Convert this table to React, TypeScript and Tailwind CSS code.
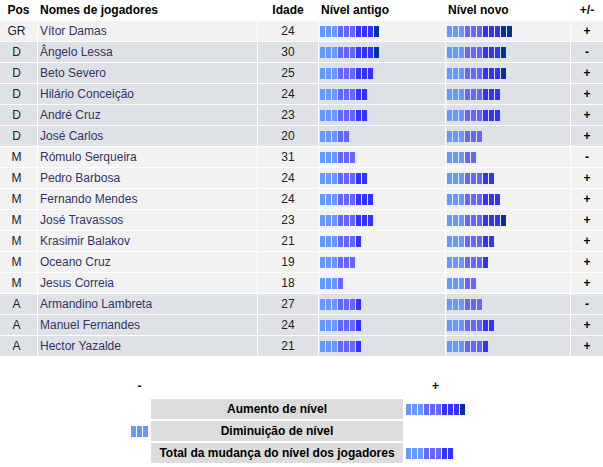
import React from "react";

type Player = [string, string, number, number, number, string];

const players: Player[] = [
  ["GR", "Vítor Damas", 24, 10, 11, "+"],
  ["D", "Ângelo Lessa", 30, 10, 10, "-"],
  ["D", "Beto Severo", 25, 9, 10, "+"],
  ["D", "Hilário Conceição", 24, 8, 9, "+"],
  ["D", "André Cruz", 23, 8, 9, "+"],
  ["D", "José Carlos", 20, 5, 6, "+"],
  ["M", "Rómulo Serqueira", 31, 6, 5, "-"],
  ["M", "Pedro Barbosa", 24, 8, 8, "+"],
  ["M", "Fernando Mendes", 24, 9, 9, "+"],
  ["M", "José Travassos", 23, 9, 10, "+"],
  ["M", "Krasimir Balakov", 21, 7, 8, "+"],
  ["M", "Oceano Cruz", 19, 6, 7, "+"],
  ["M", "Jesus Correia", 18, 4, 5, "+"],
  ["A", "Armandino Lambreta", 27, 7, 6, "-"],
  ["A", "Manuel Fernandes", 24, 7, 8, "+"],
  ["A", "Hector Yazalde", 21, 7, 7, "+"],
];

const SEG_COLORS = ["bg-[#6699ff]", "bg-[#6666ff]", "bg-[#3333ff]", "bg-[#003399]"];

const LevelBar = ({ n }: { n: number }) => (
  <div className="flex gap-px">
    {Array.from({ length: n }).map((_, i) => (
      <div key={i} className={`w-[5px] h-[11px] ${SEG_COLORS[Math.min(3, Math.floor(i / 3))]}`} />
    ))}
  </div>
);

const COLS = "grid grid-cols-[37px_219px_60px_126px_124px_32px] gap-x-px";

export default function App() {
  return (
    <div className="w-[603px] h-[467px] bg-white text-[12px] text-black" style={{ fontFamily: '"Liberation Sans", Arial, sans-serif' }}>
      <div className="flex flex-col gap-px">
        {/* header */}
        <div className={`${COLS} h-[20px] leading-[20px] font-bold`}>
          <div className="text-center">Pos</div>
          <div className="pl-[2px]">Nomes de jogadores</div>
          <div className="text-center">Idade</div>
          <div className="pl-[2px]">Nível antigo</div>
          <div className="pl-[2px]">Nível novo</div>
          <div className="text-center">+/-</div>
        </div>

        {players.map(([pos, name, age, oldLvl, newLvl, sign]) => {
          const bg = pos === "D" || pos === "A" ? "bg-[#dee2e6]" : "bg-[#f2f2f2]";
          return (
            <div key={name} className={`${COLS} h-[20px] leading-[20px]`}>
              <div className={`${bg} text-center pr-[4px] text-[#222]`}>{pos}</div>
              <div className={`${bg} pl-[2px] text-[#333366]`}>{name}</div>
              <div className={`${bg} text-center text-[#222]`}>{age}</div>
              <div className={`${bg} pl-px flex items-center`}>
                <LevelBar n={oldLvl} />
              </div>
              <div className={`${bg} pl-px flex items-center`}>
                <LevelBar n={newLvl} />
              </div>
              <div className={`${bg} text-center font-bold`}>{sign}</div>
            </div>
          );
        })}
      </div>

      {/* summary */}
      <div className="pt-[23px] grid grid-cols-[148px_252px_1fr] gap-x-[3px] gap-y-[2px] font-bold">
        <div className="flex justify-end h-[14px] leading-[14px] mb-[4px]">
          <div className="w-[17px] text-center">-</div>
        </div>
        <div />
        <div className="h-[14px] leading-[14px]">
          <div className="w-[59px] text-center">+</div>
        </div>

        <div />
        <div className="h-[20px] leading-[20px] bg-[#dcdcdc] text-center">Aumento de nível</div>
        <div className="flex items-center">
          <LevelBar n={10} />
        </div>

        <div className="flex items-center justify-end">
          <LevelBar n={3} />
        </div>
        <div className="h-[20px] leading-[20px] bg-[#dcdcdc] text-center">Diminuição de nível</div>
        <div />

        <div />
        <div className="h-[20px] leading-[20px] bg-[#dcdcdc] text-center">Total da mudança do nível dos jogadores</div>
        <div className="flex items-center">
          <LevelBar n={8} />
        </div>
      </div>
    </div>
  );
}
